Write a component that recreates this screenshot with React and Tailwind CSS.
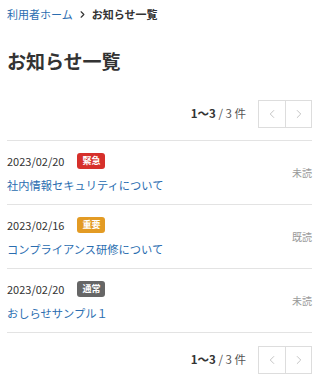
import { ChevronLeft, ChevronRight } from 'lucide-react'

const NEWS = [
  { id: 1, date: '2023/02/20', tag: '緊急', tagClass: 'bg-[#d6302b]', title: '社内情報セキュリティについて', status: '未読' },
  { id: 2, date: '2023/02/16', tag: '重要', tagClass: 'bg-[#e39b24]', title: 'コンプライアンス研修について', status: '既読' },
  { id: 3, date: '2023/02/20', tag: '通常', tagClass: 'bg-[#666666]', title: 'おしらせサンプル１', status: '未読' },
]

function Pager() {
  return (
    <div className="flex items-center justify-end gap-3">
      <span className="text-[11.5px] text-[#333]">
        <span className="font-bold">1〜3</span>
        <span className="text-[#555]"> / 3 件</span>
      </span>
      <div className="flex border border-[#ddd]">
        <button type="button" className="flex h-[26px] w-[26px] items-center justify-center text-[#bbb]">
          <ChevronLeft size={14} strokeWidth={1.5} />
        </button>
        <button type="button" className="flex h-[26px] w-[26px] items-center justify-center border-l border-[#ddd] text-[#bbb]">
          <ChevronRight size={14} strokeWidth={1.5} />
        </button>
      </div>
    </div>
  )
}

export default function App() {
  return (
    <div className="min-h-[380px] bg-white pl-[7px] pr-[8px] text-[#333] [font-family:'Noto_Sans_CJK_JP','Noto_Sans',sans-serif]">
      <nav className="flex items-center gap-1 pt-[5px] text-[11px] leading-[18px]">
        <a className="text-[#2a6db0]">利用者ホーム</a>
        <ChevronRight size={11} strokeWidth={2.5} className="text-[#333]" />
        <span className="font-bold">お知らせ一覧</span>
      </nav>

      <h1 className="mt-[24px] text-[19px] font-bold leading-[28px] text-[#333]">お知らせ一覧</h1>

      <div className="mt-[25px] pb-[12px]">
        <Pager />
      </div>

      <ul className="border-t border-[#e3e3e3]">
        {NEWS.map((n) => (
          <li key={n.id} className="flex h-[64px] items-center justify-between border-b border-[#e3e3e3]">
            <div>
              <div className="flex items-center gap-[13px] text-[11px] leading-[18px]">
                <span>{n.date}</span>
                <span className={`rounded-[3px] px-[5px] text-[9px] font-bold leading-[16px] text-white ${n.tagClass}`}>{n.tag}</span>
              </div>
              <a className="mt-[6px] block text-[11.25px] leading-[18px] text-[#2a6db0]">{n.title}</a>
            </div>
            <span className="text-[10px] text-[#999]">{n.status}</span>
          </li>
        ))}
      </ul>

      <div className="pt-[13px]">
        <Pager />
      </div>
    </div>
  )
}
